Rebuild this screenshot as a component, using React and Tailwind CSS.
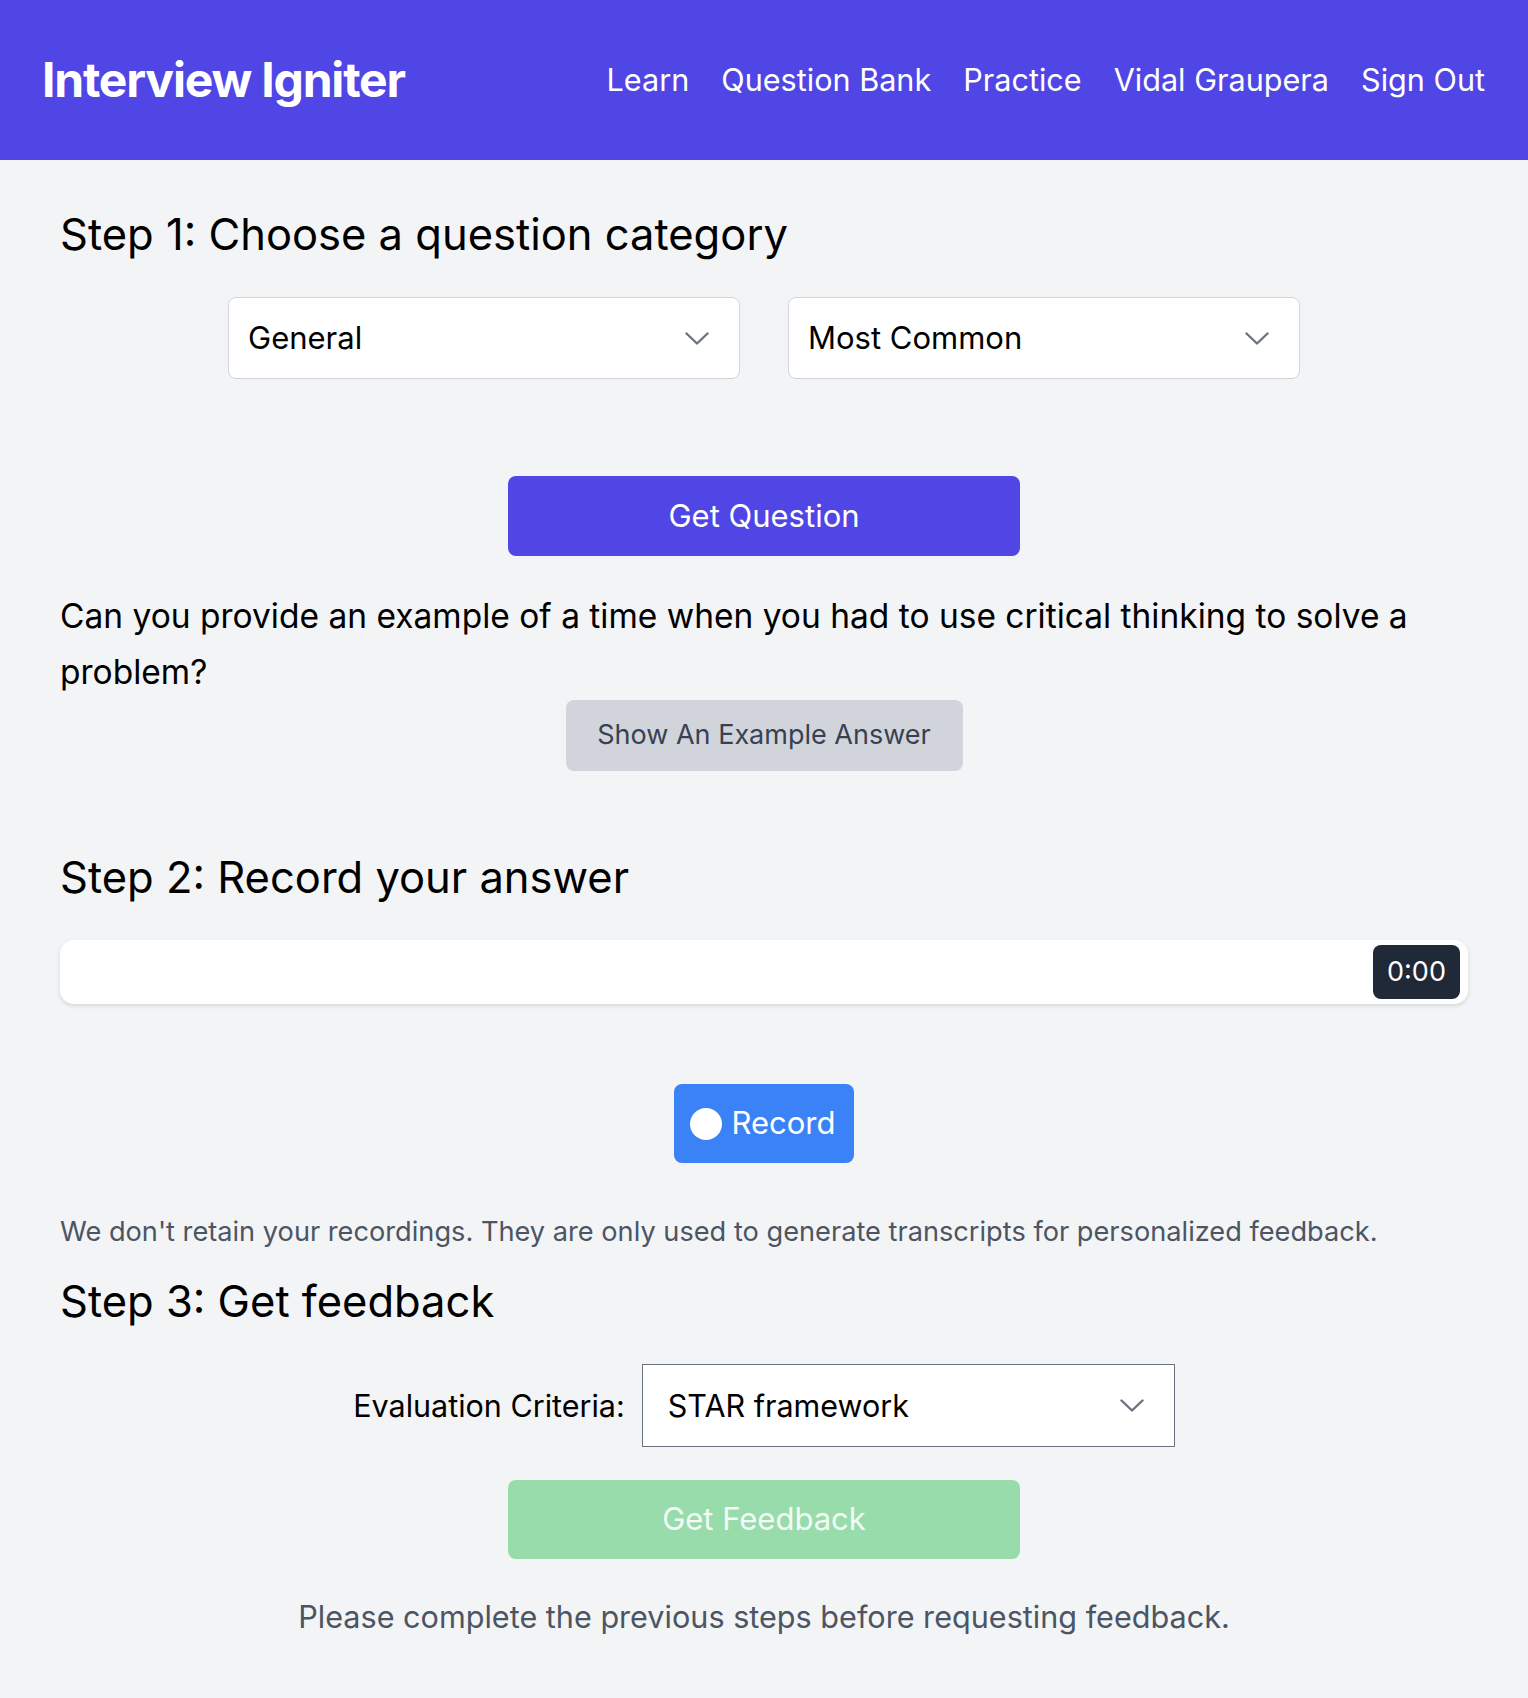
import { useState } from "react";

const navLinks = ["Learn", "Question Bank", "Practice", "Vidal Graupera", "Sign Out"];

function Chevron() {
  return (
    <svg width="24" height="13" viewBox="0 0 24 13" fill="none" className="shrink-0">
      <polyline
        points="1.5,1.5 12,11.5 22.5,1.5"
        stroke="#6b7280"
        strokeWidth="2.4"
        strokeLinecap="round"
        strokeLinejoin="round"
      />
    </svg>
  );
}

function FakeSelect({ value, className }) {
  return (
    <div
      className={`flex items-center justify-between bg-white text-black pr-[30px] ${className}`}
    >
      <span>{value}</span>
      <Chevron />
    </div>
  );
}

export default function App() {
  const [category] = useState("General");
  const [sort] = useState("Most Common");

  return (
    <div className="min-h-screen bg-[#f3f4f6] font-['Inter',sans-serif] text-black">
      {/* top bar */}
      <nav className="flex h-[160px] items-center justify-between bg-[#4f46e5] pl-[42px] pr-[43px]">
        <div className="text-[48px] font-bold tracking-tight text-white">Interview Igniter</div>
        <div className="flex gap-[32px] text-[30.6px] text-white">
          {navLinks.map((link) => (
            <a key={link} href="#" className="whitespace-nowrap">
              {link}
            </a>
          ))}
        </div>
      </nav>

      <main className="px-[60px] pt-[47px] pb-[60px]">
        {/* Step 1 */}
        <h2 className="text-[43.5px] leading-[54px]">Step 1: Choose a question category</h2>
        <div className="mt-[36px] flex justify-center gap-[48px]">
          <FakeSelect
            value={category}
            className="h-[82px] w-[512px] rounded-lg border border-gray-300 pl-[19px] text-[31px]"
          />
          <FakeSelect
            value={sort}
            className="h-[82px] w-[512px] rounded-lg border border-gray-300 pl-[19px] text-[31px]"
          />
        </div>
        <div className="mt-[97px] flex justify-center">
          <button className="h-[80px] w-[512px] rounded-lg bg-[#4f46e5] text-[31px] text-white">
            Get Question
          </button>
        </div>
        <p className="mt-[32px] text-[33.5px] leading-[56px]">
          Can you provide an example of a time when you had to use critical thinking to solve a
          problem?
        </p>
        <div className="flex justify-center">
          <button className="h-[71px] w-[397px] rounded-lg bg-[#d1d5db] text-[27px] text-[#374151]">
            Show An Example Answer
          </button>
        </div>

        {/* Step 2 */}
        <h2 className="mt-[79px] text-[43.5px] leading-[54px]">Step 2: Record your answer</h2>
        <div className="mt-[36px] flex h-[64px] items-center justify-end rounded-[14px] bg-white pr-[8px] shadow-[0_2px_4px_rgba(0,0,0,0.12)]">
          <div className="flex h-[54px] w-[87px] items-center justify-center rounded-lg bg-[#1f2937] text-[27px] text-white">
            0:00
          </div>
        </div>
        <div className="mt-[80px] flex justify-center">
          <button className="flex h-[79px] items-center gap-[9px] rounded-lg bg-[#3b82f6] pl-[16px] pr-[18px] text-[31px] text-white">
            <span className="h-[32px] w-[32px] rounded-full bg-white" />
            Record
          </button>
        </div>
        <p className="mt-[49px] text-[27.2px] leading-[40px] text-[#4b5563]">
          We don't retain your recordings. They are only used to generate transcripts for
          personalized feedback.
        </p>

        {/* Step 3 */}
        <h2 className="mt-[22px] text-[43.5px] leading-[54px]">Step 3: Get feedback</h2>
        <div className="mt-[36px] flex items-center justify-center gap-[17px]">
          <label className="text-[30.5px]">Evaluation Criteria:</label>
          <FakeSelect
            value="STAR framework"
            className="h-[83px] w-[533px] border-[1.5px] border-[#6b7280] pl-[25px] text-[30.5px]"
          />
        </div>
        <div className="mt-[33px] flex justify-center">
          <button className="h-[79px] w-[512px] cursor-not-allowed rounded-lg bg-[#99dcab] text-[31px] text-[#f2fbf5]">
            Get Feedback
          </button>
        </div>
        <p className="mt-[38px] text-center text-[30.6px] leading-[40px] text-[#4b5563]">
          Please complete the previous steps before requesting feedback.
        </p>
      </main>
    </div>
  );
}
